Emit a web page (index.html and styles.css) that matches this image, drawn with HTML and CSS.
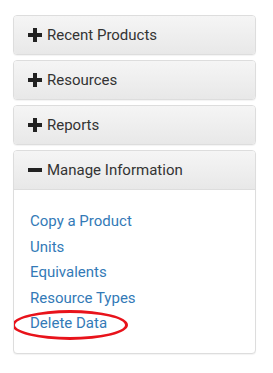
FILE: index.html
```html
<!DOCTYPE html>
<html lang="en">
<head>
    <meta charset="UTF-8">
    <title>Menu</title>
    <link rel="stylesheet" href="styles.css">
</head>
<body>
    <div class="panel-group">
        <div class="panel">
            <div class="panel-heading">
                <svg class="icon" viewBox="0 0 14 14"><path d="M5 0h4v5h5v4H9v5H5V9H0V5h5z"/></svg>
                Recent Products
            </div>
        </div>
        <div class="panel">
            <div class="panel-heading">
                <svg class="icon" viewBox="0 0 14 14"><path d="M5 0h4v5h5v4H9v5H5V9H0V5h5z"/></svg>
                Resources
            </div>
        </div>
        <div class="panel">
            <div class="panel-heading">
                <svg class="icon" viewBox="0 0 14 14"><path d="M5 0h4v5h5v4H9v5H5V9H0V5h5z"/></svg>
                Reports
            </div>
        </div>
        <div class="panel">
            <div class="panel-heading">
                <svg class="icon" viewBox="0 0 14 14"><path d="M0 5h14v4H0z"/></svg>
                Manage Information
            </div>
            <div class="panel-body">
                <ul class="links">
                    <li><a href="#">Copy a Product</a></li>
                    <li><a href="#">Units</a></li>
                    <li><a href="#">Equivalents</a></li>
                    <li><a href="#">Resource Types</a></li>
                    <li class="marked"><a href="#">Delete Data</a></li>
                </ul>
            </div>
        </div>
    </div>
</body>
</html>
```

FILE: styles.css
```css
body {
    margin: 0;
    font-family: 'Roboto', 'Liberation Sans', sans-serif;
    color: #333;
    background: #fff;
}
.panel-group {
    width: 243px;
    margin-left: 13px;
    padding-top: 15px;
}
.panel {
    border: 1px solid #ddd;
    border-radius: 4px;
    background: #fff;
    margin-bottom: 5px;
    box-shadow: 0 1px 1px rgba(0, 0, 0, 0.05);
    overflow: hidden;
}
.panel-heading {
    display: flex;
    align-items: center;
    gap: 5px;
    height: 38px;
    padding: 0 14px;
    font-size: 15px;
    background-image: linear-gradient(#f5f5f5, #e8e8e8);
}
.panel-body {
    border-top: 1px solid #ddd;
    padding: 19px 16px 16px;
}
.icon {
    width: 14px;
    height: 14px;
    fill: #222;
}
.links {
    list-style: none;
    margin: 0;
    padding: 0;
}
.links li {
    line-height: 25.5px;
    font-size: 15px;
}
.links a {
    color: #337ab7;
    text-decoration: none;
}
.marked {
    position: relative;
}
.marked::after {
    content: "";
    position: absolute;
    left: -18px;
    top: -1px;
    width: 110px;
    height: 24px;
    border: 3px solid #e8131b;
    border-radius: 50%;
}
```
